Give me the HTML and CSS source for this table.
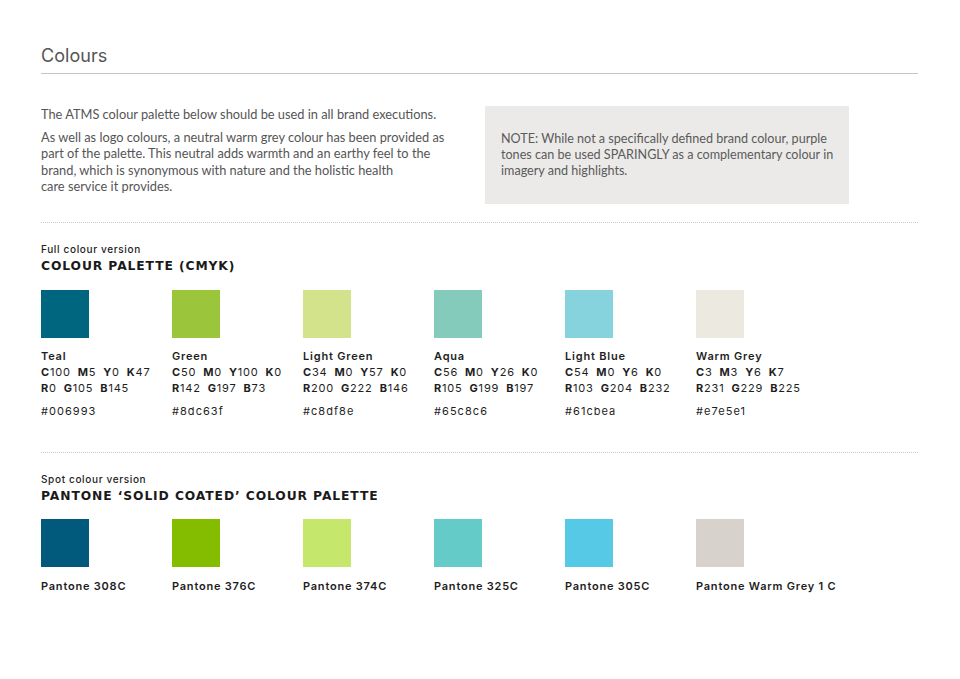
FILE: index.html
```html
<!DOCTYPE html>
<html lang="en">
<head>
<meta charset="utf-8">
<title>Colours</title>
<link rel="stylesheet" href="styles.css">
</head>
<body>
<div class="page">
  <header class="title-bar">
    <h1>Colours</h1>
  </header>

  <section class="intro">
    <div class="intro-text">
      <p>The ATMS colour palette below should be used in all brand executions.</p>
      <p>As well as logo colours, a neutral warm grey colour has been provided as part of the palette. This neutral adds warmth and an earthy feel to the brand, which is synonymous with nature and the holistic health<br>care service it provides.</p>
    </div>
    <div class="note">
      NOTE: While not a specifically defined brand colour, purple tones can be used SPARINGLY as a complementary colour in imagery and highlights.
    </div>
  </section>

  <section class="palette first">
    <div class="sub">Full colour version</div>
    <h2>COLOUR PALETTE (CMYK)</h2>
    <div class="swatches">
      <div class="sw">
        <div class="chip teal"></div>
        <div class="name">Teal</div>
        <div class="code"><b>C</b>100<i></i><b>M</b>5<i></i><b>Y</b>0<i></i><b>K</b>47</div>
        <div class="code"><b>R</b>0<i></i><b>G</b>105<i></i><b>B</b>145</div>
        <div class="hex">#006993</div>
      </div>
      <div class="sw">
        <div class="chip green"></div>
        <div class="name">Green</div>
        <div class="code"><b>C</b>50<i></i><b>M</b>0<i></i><b>Y</b>100<i></i><b>K</b>0</div>
        <div class="code"><b>R</b>142<i></i><b>G</b>197<i></i><b>B</b>73</div>
        <div class="hex">#8dc63f</div>
      </div>
      <div class="sw">
        <div class="chip lgreen"></div>
        <div class="name">Light Green</div>
        <div class="code"><b>C</b>34<i></i><b>M</b>0<i></i><b>Y</b>57<i></i><b>K</b>0</div>
        <div class="code"><b>R</b>200<i></i><b>G</b>222<i></i><b>B</b>146</div>
        <div class="hex">#c8df8e</div>
      </div>
      <div class="sw">
        <div class="chip aqua"></div>
        <div class="name">Aqua</div>
        <div class="code"><b>C</b>56<i></i><b>M</b>0<i></i><b>Y</b>26<i></i><b>K</b>0</div>
        <div class="code"><b>R</b>105<i></i><b>G</b>199<i></i><b>B</b>197</div>
        <div class="hex">#65c8c6</div>
      </div>
      <div class="sw">
        <div class="chip lblue"></div>
        <div class="name">Light Blue</div>
        <div class="code"><b>C</b>54<i></i><b>M</b>0<i></i><b>Y</b>6<i></i><b>K</b>0</div>
        <div class="code"><b>R</b>103<i></i><b>G</b>204<i></i><b>B</b>232</div>
        <div class="hex">#61cbea</div>
      </div>
      <div class="sw">
        <div class="chip wgrey"></div>
        <div class="name">Warm Grey</div>
        <div class="code"><b>C</b>3<i></i><b>M</b>3<i></i><b>Y</b>6<i></i><b>K</b>7</div>
        <div class="code"><b>R</b>231<i></i><b>G</b>229<i></i><b>B</b>225</div>
        <div class="hex">#e7e5e1</div>
      </div>
    </div>
  </section>

  <section class="palette second">
    <div class="sub">Spot colour version</div>
    <h2>PANTONE ‘SOLID COATED’ COLOUR PALETTE</h2>
    <div class="swatches">
      <div class="sw"><div class="chip p308"></div><div class="name pname">Pantone 308C</div></div>
      <div class="sw"><div class="chip p376"></div><div class="name pname">Pantone 376C</div></div>
      <div class="sw"><div class="chip p374"></div><div class="name pname">Pantone 374C</div></div>
      <div class="sw"><div class="chip p325"></div><div class="name pname">Pantone 325C</div></div>
      <div class="sw"><div class="chip p305"></div><div class="name pname">Pantone 305C</div></div>
      <div class="sw"><div class="chip pwg"></div><div class="name pname">Pantone Warm Grey 1 C</div></div>
    </div>
  </section>
</div>
</body>
</html>
```

FILE: styles.css
```css
* { box-sizing: border-box; }
html, body { margin: 0; padding: 0; background: #fff; }
body {
  font-family: Lato, "Open Sans", Arial, sans-serif;
  color: #222;
}
.page {
  padding: 0 42px 0 41px;
}
.title-bar {
  padding-top: 44px;
  border-bottom: 1px solid #c4c4c4;
  padding-bottom: 5px;
}
.title-bar h1 {
  margin: 0;
  font-family: Inter, "Noto Sans", sans-serif;
  font-weight: 400;
  font-size: 18px;
  line-height: 24px;
  color: #555;
  letter-spacing: 0.05px;
}
.intro {
  display: flex;
  gap: 32px;
  margin-top: 32px;
  padding-bottom: 18px;
  border-bottom: 1px dotted #c9c9c9;
}
.intro-text {
  width: 412px;
  font-size: 12.8px;
  line-height: 16.4px;
  color: #555;
}
.intro-text p { margin: 0 0 6.5px; }
.note {
  width: 364px;
  height: 98px;
  background: #ebeae8;
  padding: 25px 12px 0 16px;
  font-size: 12.6px;
  line-height: 16.2px;
  color: #5a5a5a;
}
.palette .sub {
  font-family: Inter, "Noto Sans", sans-serif;
  font-size: 10px;
  line-height: 14px;
  font-weight: 500;
  letter-spacing: 0.65px;
  color: #222;
}
.palette h2 {
  margin: 2px 0 0;
  font-family: "DejaVu Sans", Inter, sans-serif;
  font-size: 12.3px;
  line-height: 16px;
  font-weight: 700;
  letter-spacing: 0.9px;
  color: #1a1a1a;
}
.palette.first { padding-top: 19px; padding-bottom: 33px; border-bottom: 1px dotted #c9c9c9; }
.palette.second { padding-top: 19px; }
.swatches {
  display: grid;
  grid-template-columns: repeat(6, 131px);
  margin-top: 16px;
}
.palette.second .swatches { margin-top: 15px; }
.chip { width: 48px; height: 48px; }
.sw .name, .sw .code, .sw .hex {
  font-family: Inter, "Noto Sans", sans-serif;
  font-size: 11px;
  line-height: 16px;
  color: #1e1e1e;
  white-space: nowrap;
  letter-spacing: 0.8px;
}
.sw .name { margin-top: 10px; font-weight: 600; }
.sw .pname { margin-top: 11px; letter-spacing: 0.78px; }
.sw .code { font-weight: 400; }
.sw .code b { font-weight: 700; }
.sw .code i { display: inline-block; width: 7px; }
.sw .hex { margin-top: 7px; letter-spacing: 1.05px; }

.teal { background: #00667f; }
.green { background: #9bc53a; }
.lgreen { background: #d3e38c; }
.aqua { background: #84cbbc; }
.lblue { background: #87d3dd; }
.wgrey { background: #ece9e0; }
.p308 { background: #01597b; }
.p376 { background: #84bc00; }
.p374 { background: #c4e76c; }
.p325 { background: #64cbc8; }
.p305 { background: #55c9e6; }
.pwg { background: #d7d3cc; }
```
